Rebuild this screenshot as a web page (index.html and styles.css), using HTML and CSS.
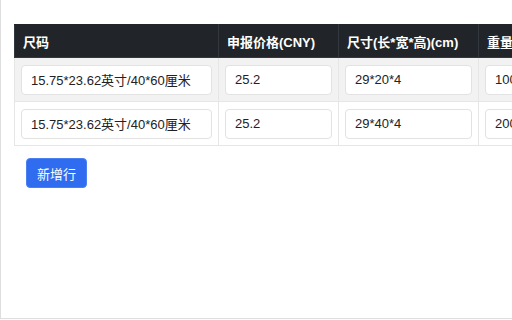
FILE: index.html
```html
<!DOCTYPE html>
<html lang="zh-CN">
<head>
<meta charset="utf-8">
<link rel="stylesheet" href="styles.css">
</head>
<body>
<div class="frame">
  <table class="grid">
    <colgroup>
      <col class="c1"><col class="c2"><col class="c3"><col class="c4">
    </colgroup>
    <thead>
      <tr>
        <th>尺码</th>
        <th>申报价格(CNY)</th>
        <th>尺寸(长*宽*高)(cm)</th>
        <th>重量(g)</th>
      </tr>
    </thead>
    <tbody>
      <tr class="odd">
        <td><input class="field" value="15.75*23.62英寸/40*60厘米"></td>
        <td><input class="field" value="25.2"></td>
        <td><input class="field" value="29*20*4"></td>
        <td><input class="field" value="1000"></td>
      </tr>
      <tr>
        <td><input class="field" value="15.75*23.62英寸/40*60厘米"></td>
        <td><input class="field" value="25.2"></td>
        <td><input class="field" value="29*40*4"></td>
        <td><input class="field" value="2000"></td>
      </tr>
    </tbody>
  </table>
  <div class="actions">
    <button class="btn">新增行</button>
  </div>
</div>
</body>
</html>
```

FILE: styles.css
```css
html, body {
  margin: 0;
  padding: 0;
  background: #fff;
  overflow: hidden;
}
body {
  width: 512px;
  height: 320px;
  font-family: "Liberation Sans", "Noto Sans CJK SC", sans-serif;
  color: #212529;
}
.frame {
  box-sizing: border-box;
  width: 700px;
  height: 319px;
  border-left: 1px solid #dedede;
  border-bottom: 1px solid #dedede;
  padding: 24px 0 0 13px;
}
.grid {
  border-collapse: collapse;
  table-layout: fixed;
  width: 584px;
}
.c1 { width: 204px; }
.c2 { width: 120px; }
.c3 { width: 140px; }
.c4 { width: 120px; }
.grid th {
  background: #212529;
  color: #fff;
  font-weight: bold;
  font-size: 13px;
  text-align: left;
  height: 33px;
  padding: 0 8px;
  box-sizing: border-box;
  border: 1px solid #32383e;
  border-top-color: #212529;
  white-space: nowrap;
  overflow: hidden;
}
.grid td {
  border: 1px solid #e6e6e6;
  padding: 6px 6px;
  height: 44px;
  box-sizing: border-box;
}
.grid tr.odd td {
  background: #f2f2f2;
}
.field {
  box-sizing: border-box;
  width: 100%;
  height: 30px;
  border: 1px solid #e2e2e2;
  border-radius: 4px;
  background: #fff;
  padding: 0 9px;
  font-family: "Liberation Sans", "Noto Sans CJK SC", sans-serif;
  font-size: 13px;
  color: #222;
  outline: none;
}
.actions {
  padding: 12px 0 0 12px;
}
.btn {
  height: 30px;
  padding: 0 10px;
  border: 1px solid #4a80f0;
  border-radius: 4px;
  background: #2f6cf0;
  color: #fff;
  font-family: "Liberation Sans", "Noto Sans CJK SC", sans-serif;
  font-size: 13px;
}
```
